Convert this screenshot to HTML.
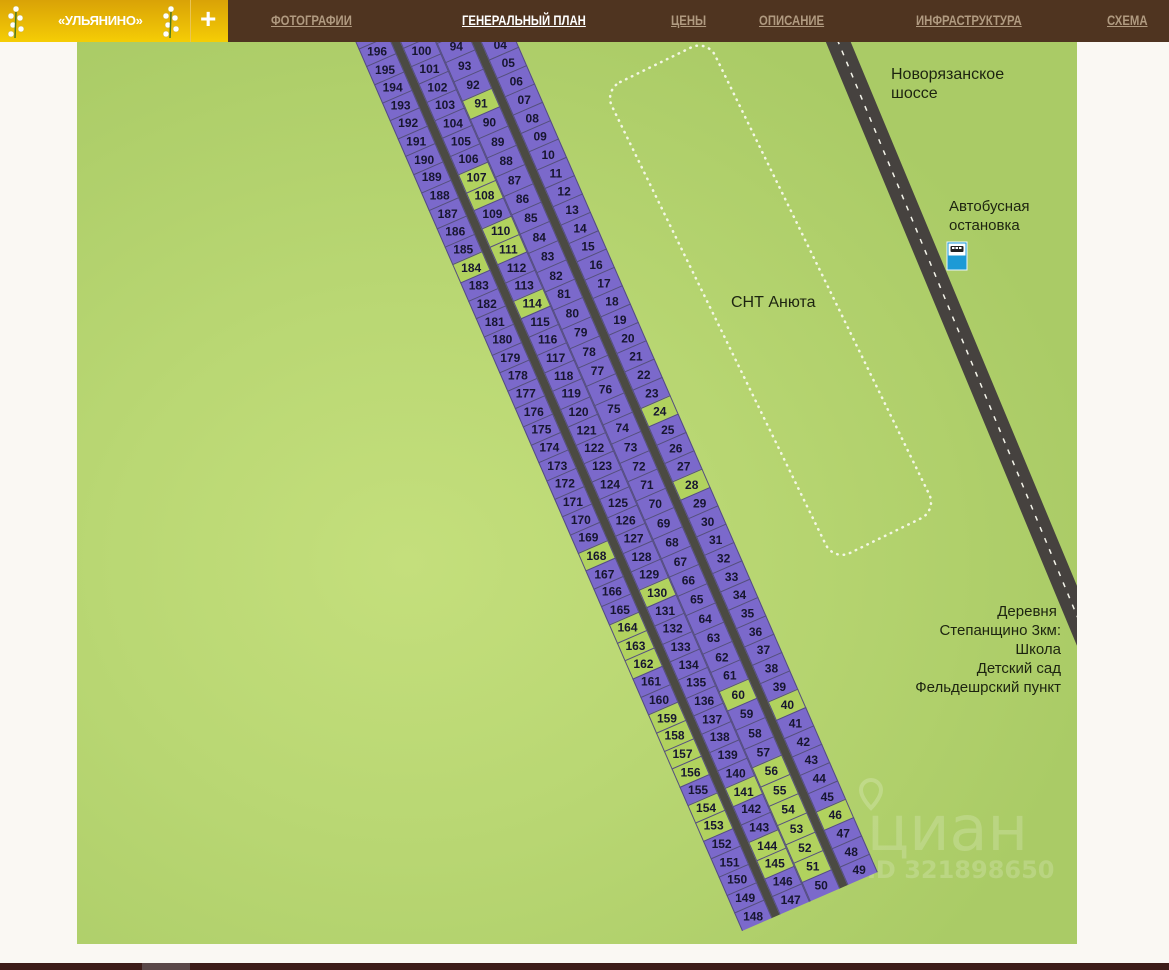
<!DOCTYPE html>
<html><head><meta charset="utf-8">
<style>
*{margin:0;padding:0;box-sizing:border-box}
html,body{width:1169px;height:970px;overflow:hidden;background:#faf8f3;font-family:"Liberation Sans",sans-serif}
#hdr{position:absolute;left:0;top:0;width:1169px;height:42px;background:#4f3420}
#logo{position:absolute;left:0;top:0;width:228px;height:42px;background:linear-gradient(#d9a207,#f5cd05)}
#logo .t{position:absolute;left:58px;top:13px;color:#fff;font-weight:bold;font-size:13px;letter-spacing:-0.3px}
#logo .div{position:absolute;left:190px;top:0;width:1px;height:42px;background:#e9c455}
#logo .plus{position:absolute;left:200px;top:4px;color:#fff;font-size:28px;font-weight:bold;line-height:30px}
.fl{position:absolute;top:4px;width:26px;height:36px}
.nav{position:absolute;top:12px;font-size:14px;font-weight:bold;color:#b09a80;text-decoration:underline;transform:scaleX(0.81);transform-origin:0 0;white-space:nowrap}
.nav.a{color:#fff}
#map{position:absolute;left:77px;top:42px;width:1000px;height:902px;overflow:hidden;
background:radial-gradient(ellipse 700px 600px at 330px 520px,#c4df7c 0%,#b9d773 45%,#aacb66 100%)}
#strip{position:absolute;left:665px;top:-111px;width:148px;height:1000px;transform-origin:0 100%;transform:rotate(-23.5deg);display:flex}
.col{width:33px;height:1000px;display:flex;flex-direction:column-reverse}
.road{width:8px;height:1000px;background:#4b4a43}
.col div{flex:none;background:#7b69cb;border:1px solid #544d80;border-bottom:none;display:flex;align-items:center;justify-content:center}
.col div.g{background:#b1d25e}
.col span{display:block;transform:rotate(23.5deg);font-size:12px;font-weight:bold;color:#171630}
.c1 div{height:19.65px}.c2 div{height:19.7px}.c3 div{height:20.8px}.c4 div{height:20px}
.lbl{position:absolute;font-family:"Liberation Sans",sans-serif;font-size:16px;color:#1d2410;line-height:19px}
#ft{position:absolute;left:0;top:963px;width:1169px;height:7px;background:#3d1d18}
</style></head><body>
<div id="hdr">
 <div id="logo">
  <svg class="fl" style="left:3px" viewBox="0 0 26 36"><g fill="#fff" stroke="#c9b030" stroke-width=".5"><circle cx="13" cy="5" r="3"/><circle cx="8" cy="12" r="3"/><circle cx="17" cy="14" r="3"/><circle cx="10" cy="21" r="3"/><circle cx="18" cy="25" r="3"/><circle cx="8" cy="30" r="3"/></g><path d="M13 8 L12 34" stroke="#4c7a20" stroke-width="1.5"/></svg>
  <span class="t">«УЛЬЯНИНО»</span>
  <svg class="fl" style="left:158px" viewBox="0 0 26 36"><g fill="#fff" stroke="#c9b030" stroke-width=".5"><circle cx="13" cy="5" r="3"/><circle cx="8" cy="12" r="3"/><circle cx="17" cy="14" r="3"/><circle cx="10" cy="21" r="3"/><circle cx="18" cy="25" r="3"/><circle cx="8" cy="30" r="3"/></g><path d="M13 8 L12 34" stroke="#4c7a20" stroke-width="1.5"/></svg>
  <div class="div"></div>
  <div class="plus">+</div>
 </div>
 <span class="nav" style="left:271px">ФОТОГРАФИИ</span>
 <span class="nav a" style="left:462px">ГЕНЕРАЛЬНЫЙ ПЛАН</span>
 <span class="nav" style="left:671px">ЦЕНЫ</span>
 <span class="nav" style="left:759px">ОПИСАНИЕ</span>
 <span class="nav" style="left:916px">ИНФРАСТРУКТУРА</span>
 <span class="nav" style="left:1107px">СХЕМА</span>
</div>
<div id="map">
 <svg width="1000" height="902" style="position:absolute;left:0;top:0">
  <line x1="728" y1="-80" x2="1040" y2="670" stroke="#46423f" stroke-width="23"/>
  <line x1="728" y1="-80" x2="1040" y2="670" stroke="#f4f4ea" stroke-width="1.5" stroke-dasharray="5 7"/>
  <rect x="636" y="-4" width="115" height="524" rx="18" transform="rotate(-26 694 258)" fill="none" stroke="#f3f7e4" stroke-width="2.5" stroke-dasharray="0.5 6" stroke-linecap="round"/>
  <g transform="translate(870,200)">
   <rect x="0" y="0" width="20" height="28" fill="#1d9ad6" stroke="#e8f4ff" stroke-width="1"/>
   <rect x="1.5" y="1.5" width="17" height="12" fill="#fff"/>
   <rect x="3.5" y="4" width="13" height="6" rx="1" fill="#222"/>
   <rect x="5" y="5" width="2.5" height="2" fill="#fff"/><rect x="8.5" y="5" width="2.5" height="2" fill="#fff"/><rect x="12" y="5" width="2.5" height="2" fill="#fff"/>
  </g>
  <text x="790" y="808" font-family="DejaVu Sans,sans-serif" font-size="62" fill="#ffffff" fill-opacity="0.18">циан</text>
  <text x="790" y="836" font-family="DejaVu Sans,sans-serif" font-size="24" font-weight="bold" fill="#ffffff" fill-opacity="0.18">ID 321898650</text>
  <path d="M784 748 a10 10 0 1 1 20 0 c0 8 -10 18 -10 18 c0 0 -10 -10 -10 -18z" fill="none" stroke="#fff" stroke-opacity="0.2" stroke-width="4"/>
 </svg>
 <div class="lbl" style="left:814px;top:23px">Новорязанское<br>шоссе</div>
 <div class="lbl" style="left:872px;top:155px;font-size:15px">Автобусная<br>остановка</div>
 <div class="lbl" style="left:654px;top:251px">СНТ Анюта</div>
 <div class="lbl" style="right:16px;top:560px;text-align:right;font-size:15px">Деревня&nbsp;<br>Степанщино 3км:<br>Школа<br>Детский сад<br>Фельдешрский пункт</div>
 <div id="strip">
  <div class="col c1">
   <div><span>148</span></div><div><span>149</span></div><div><span>150</span></div><div><span>151</span></div><div><span>152</span></div><div class="g"><span>153</span></div><div class="g"><span>154</span></div><div><span>155</span></div><div class="g"><span>156</span></div><div class="g"><span>157</span></div><div class="g"><span>158</span></div><div class="g"><span>159</span></div><div><span>160</span></div><div><span>161</span></div><div class="g"><span>162</span></div><div class="g"><span>163</span></div><div class="g"><span>164</span></div><div><span>165</span></div><div><span>166</span></div><div><span>167</span></div><div class="g"><span>168</span></div><div><span>169</span></div><div><span>170</span></div><div><span>171</span></div><div><span>172</span></div><div><span>173</span></div><div><span>174</span></div><div><span>175</span></div><div><span>176</span></div><div><span>177</span></div><div><span>178</span></div><div><span>179</span></div><div><span>180</span></div><div><span>181</span></div><div><span>182</span></div><div><span>183</span></div><div class="g"><span>184</span></div><div><span>185</span></div><div><span>186</span></div><div><span>187</span></div><div><span>188</span></div><div><span>189</span></div><div><span>190</span></div><div><span>191</span></div><div><span>192</span></div><div><span>193</span></div><div><span>194</span></div><div><span>195</span></div><div><span>196</span></div><div><span>197</span></div>
  </div>
  <div class="road"></div>
  <div class="col c2">
   <div><span>147</span></div><div><span>146</span></div><div class="g"><span>145</span></div><div class="g"><span>144</span></div><div><span>143</span></div><div><span>142</span></div><div class="g"><span>141</span></div><div><span>140</span></div><div><span>139</span></div><div><span>138</span></div><div><span>137</span></div><div><span>136</span></div><div><span>135</span></div><div><span>134</span></div><div><span>133</span></div><div><span>132</span></div><div><span>131</span></div><div class="g"><span>130</span></div><div><span>129</span></div><div><span>128</span></div><div><span>127</span></div><div><span>126</span></div><div><span>125</span></div><div><span>124</span></div><div><span>123</span></div><div><span>122</span></div><div><span>121</span></div><div><span>120</span></div><div><span>119</span></div><div><span>118</span></div><div><span>117</span></div><div><span>116</span></div><div><span>115</span></div><div class="g"><span>114</span></div><div><span>113</span></div><div><span>112</span></div><div class="g"><span>111</span></div><div class="g"><span>110</span></div><div><span>109</span></div><div class="g"><span>108</span></div><div class="g"><span>107</span></div><div><span>106</span></div><div><span>105</span></div><div><span>104</span></div><div><span>103</span></div><div><span>102</span></div><div><span>101</span></div><div><span>100</span></div><div><span>99</span></div>
  </div>
  <div class="col c3">
   <div><span>50</span></div><div class="g"><span>51</span></div><div class="g"><span>52</span></div><div class="g"><span>53</span></div><div class="g"><span>54</span></div><div class="g"><span>55</span></div><div class="g"><span>56</span></div><div><span>57</span></div><div><span>58</span></div><div><span>59</span></div><div class="g"><span>60</span></div><div><span>61</span></div><div><span>62</span></div><div><span>63</span></div><div><span>64</span></div><div><span>65</span></div><div><span>66</span></div><div><span>67</span></div><div><span>68</span></div><div><span>69</span></div><div><span>70</span></div><div><span>71</span></div><div><span>72</span></div><div><span>73</span></div><div><span>74</span></div><div><span>75</span></div><div><span>76</span></div><div><span>77</span></div><div><span>78</span></div><div><span>79</span></div><div><span>80</span></div><div><span>81</span></div><div><span>82</span></div><div><span>83</span></div><div><span>84</span></div><div><span>85</span></div><div><span>86</span></div><div><span>87</span></div><div><span>88</span></div><div><span>89</span></div><div><span>90</span></div><div class="g"><span>91</span></div><div><span>92</span></div><div><span>93</span></div><div><span>94</span></div><div><span>95</span></div><div><span>96</span></div>
  </div>
  <div class="road"></div>
  <div class="col c4">
   <div><span>49</span></div><div><span>48</span></div><div><span>47</span></div><div class="g"><span>46</span></div><div><span>45</span></div><div><span>44</span></div><div><span>43</span></div><div><span>42</span></div><div><span>41</span></div><div class="g"><span>40</span></div><div><span>39</span></div><div><span>38</span></div><div><span>37</span></div><div><span>36</span></div><div><span>35</span></div><div><span>34</span></div><div><span>33</span></div><div><span>32</span></div><div><span>31</span></div><div><span>30</span></div><div><span>29</span></div><div class="g"><span>28</span></div><div><span>27</span></div><div><span>26</span></div><div><span>25</span></div><div class="g"><span>24</span></div><div><span>23</span></div><div><span>22</span></div><div><span>21</span></div><div><span>20</span></div><div><span>19</span></div><div><span>18</span></div><div><span>17</span></div><div><span>16</span></div><div><span>15</span></div><div><span>14</span></div><div><span>13</span></div><div><span>12</span></div><div><span>11</span></div><div><span>10</span></div><div><span>09</span></div><div><span>08</span></div><div><span>07</span></div><div><span>06</span></div><div><span>05</span></div><div><span>04</span></div><div><span>03</span></div><div><span>02</span></div>
  </div>
 </div>
</div>
<div id="ft"><div style="position:absolute;left:142px;top:0;width:48px;height:7px;background:#5a4848"></div></div>
</body></html>
